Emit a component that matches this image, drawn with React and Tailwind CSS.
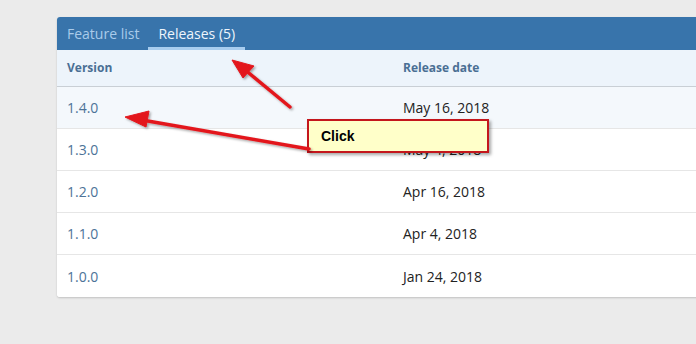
import React from 'react';

const releases = [
  { version: '1.4.0', date: 'May 16, 2018', active: true },
  { version: '1.3.0', date: 'May 4, 2018' },
  { version: '1.2.0', date: 'Apr 16, 2018' },
  { version: '1.1.0', date: 'Apr 4, 2018' },
  { version: '1.0.0', date: 'Jan 24, 2018' },
];

const font = { fontFamily: '"Open Sans", "Noto Sans", sans-serif' };

const Arrows = () => (
  <svg className="absolute inset-0 pointer-events-none" width="696" height="344">
    <defs>
      <filter id="sh" x="-20%" y="-20%" width="140%" height="140%">
        <feDropShadow dx="1.5" dy="1.5" stdDeviation="1.2" floodColor="#000" floodOpacity="0.35" />
      </filter>
    </defs>
    <g filter="url(#sh)" fill="#e3171c" stroke="#e3171c">
      <line x1="290" y1="107" x2="244" y2="69" strokeWidth="3.5" strokeLinecap="round" />
      <polygon points="232,60 254,66 243,78" strokeWidth="1" strokeLinejoin="round" />
      <line x1="309" y1="149" x2="142" y2="120" strokeWidth="3.5" strokeLinecap="round" />
      <polygon points="125,117 149,111 146,127" strokeWidth="1" strokeLinejoin="round" />
    </g>
  </svg>
);

export default function App() {
  return (
    <div className="relative w-[696px] h-[344px] overflow-hidden bg-[#ebebeb]" style={font}>
      <div className="pt-[17px] pl-[57px]">
        <div className="w-[700px] rounded-[3px] bg-white shadow-[0_1px_2px_rgba(0,0,0,0.18)] overflow-hidden">
          {/* Tabs */}
          <div className="h-[33px] bg-[#3874ab] flex items-stretch px-[1px] text-[14px]">
            <div className="px-[9px] flex items-center text-[#a9cbea]">Feature list</div>
            <div className="px-[10px] flex items-center text-[#eef5fc] border-b-[3px] border-[#a8cdef] pt-[3px]">
              Releases (5)
            </div>
          </div>
          {/* Header */}
          <div className="h-[37px] flex items-center bg-[#edf4fb] border-b border-[#c9cfd5] text-[12px] font-bold text-[#4a6f94]">
            <div className="w-[336px] pl-[10px]">Version</div>
            <div className="pl-[10px]">Release date</div>
          </div>
          {/* Rows */}
          {releases.map((r, i) => (
            <div
              key={r.version}
              className={`h-[42px] flex items-center text-[14px] ${i < releases.length - 1 ? 'border-b border-[#e6e6e6]' : ''} ${r.active ? 'bg-[#f4f8fc]' : 'bg-white'}`}
            >
              <div className="w-[336px] pl-[10px] text-[#4d7398]">{r.version}</div>
              <div className="pl-[10px] text-[#222]">{r.date}</div>
            </div>
          ))}
        </div>
      </div>

      {/* Callout */}
      <div
        className="absolute left-[307px] top-[119px] w-[182px] h-[34px] bg-[#ffffc9] border-2 border-[#c4161c] shadow-[2px_2px_3px_rgba(0,0,0,0.35)] flex items-center pl-[12px] text-[14px] font-bold text-black"
        style={{ fontFamily: '"Liberation Sans", Arial, sans-serif' }}
      >
        Click
      </div>
      <Arrows />
    </div>
  );
}
